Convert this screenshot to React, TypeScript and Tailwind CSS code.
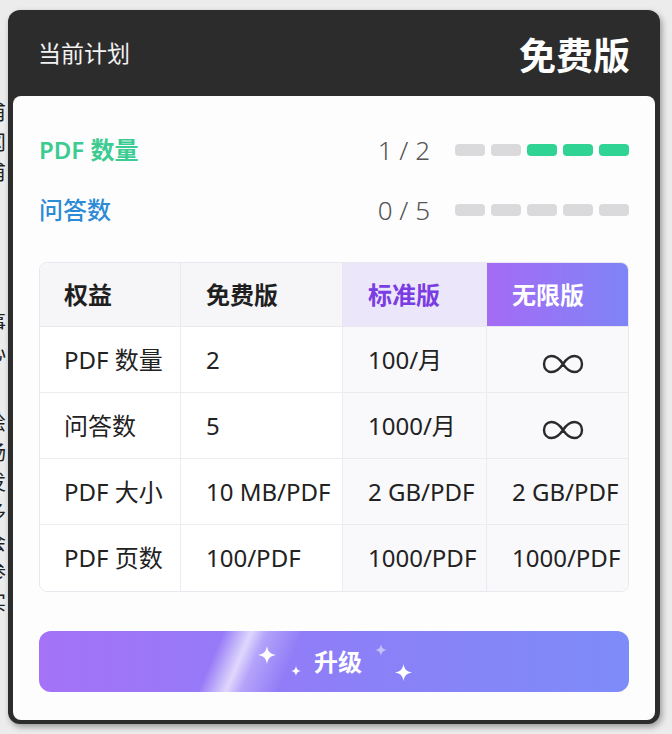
import React from "react";

type Cell = { text?: string; infinity?: boolean };

const rows: { label: string; cells: Cell[] }[] = [
  { label: "PDF 数量", cells: [{ text: "2" }, { text: "100/月" }, { infinity: true }] },
  { label: "问答数", cells: [{ text: "5" }, { text: "1000/月" }, { infinity: true }] },
  { label: "PDF 大小", cells: [{ text: "10 MB/PDF" }, { text: "2 GB/PDF" }, { text: "2 GB/PDF" }] },
  { label: "PDF 页数", cells: [{ text: "100/PDF" }, { text: "1000/PDF" }, { text: "1000/PDF" }] },
];

function Infinity() {
  return (
    <svg width="42" height="22" viewBox="0 0 42 22" fill="none">
      <path
        d="M21 11 C17 5 13 3 9.5 3 C5 3 2 6.5 2 11 C2 15.5 5 19 9.5 19 C13 19 17 17 21 11 C25 5 29 3 32.5 3 C37 3 40 6.5 40 11 C40 15.5 37 19 32.5 19 C29 19 25 17 21 11 Z"
        stroke="#2a2a2e"
        strokeWidth="2.4"
      />
    </svg>
  );
}

function Sparkle({ size, className }: { size: number; className: string }) {
  return (
    <svg width={size} height={size} viewBox="0 0 20 20" className={className}>
      <path d="M10 0 C11.2 6.5 13.5 8.8 20 10 C13.5 11.2 11.2 13.5 10 20 C8.8 13.5 6.5 11.2 0 10 C6.5 8.8 8.8 6.5 10 0 Z" fill="white" />
    </svg>
  );
}

function UsageBars({ filled, color }: { filled: number; color: string }) {
  return (
    <div className="ml-[25px] flex gap-[6px]">
      {[0, 1, 2, 3, 4].map((i) => (
        <div
          key={i}
          className={`h-[12px] w-[30px] rounded-[4px] ${i >= 5 - filled ? color : "bg-[#dadadc]"}`}
        />
      ))}
    </div>
  );
}

export default function App() {
  return (
    <div
      className="relative flex h-[734px] w-[672px] overflow-hidden bg-[#ececec]"
      style={{ fontFamily: '"Noto Sans", "Noto Sans CJK SC", sans-serif' }}
    >
      {/* page peeking out behind the dialog */}
      <div className="flex w-[8px] flex-col overflow-hidden pt-[100px] text-[20px] leading-[26px] text-[#222]">
        <div className="-ml-[14px] flex flex-col gap-[4px]">
          <span>甫</span>
          <span>冈</span>
          <span>甫</span>
          <span className="mt-[120px]">事</span>
          <span>心</span>
          <span className="mt-[40px]">绘</span>
          <span>杨</span>
          <span>发</span>
          <span>多</span>
          <span>会</span>
          <span>参</span>
          <span>实</span>
        </div>
      </div>

      <div className="mt-[10px] flex h-[714px] w-[652px] flex-col rounded-[12px] bg-[#2c2c2c] px-[5px] pb-[4px] shadow-[2px_3px_6px_rgba(0,0,0,0.35)]">
        <div className="flex h-[87px] items-center justify-between px-[25px]">
          <span className="text-[23px] text-[#f2f2f2]">当前计划</span>
          <span className="mt-[6px] text-[37px] font-bold text-white">免费版</span>
        </div>

        <div className="flex flex-1 flex-col rounded-[8px] bg-[#fdfdfe] px-[26px] pb-[28px] pt-[36px]">
          <div className="flex h-[36px] items-center">
            <span className="flex-1 text-[24px] font-semibold text-[#3ccb90]">PDF 数量</span>
            <span className="text-[26px] font-light text-[#555]">1 / 2</span>
            <UsageBars filled={3} color="bg-[#2fd393]" />
          </div>
          <div className="mt-[24px] flex h-[36px] items-center">
            <span className="flex-1 text-[24px] font-medium text-[#2d8bd6]">问答数</span>
            <span className="text-[26px] font-light text-[#555]">0 / 5</span>
            <UsageBars filled={0} color="bg-[#2fd393]" />
          </div>

          <div className="mt-[34px] overflow-hidden rounded-[8px] border border-[#e8e8ee]">
            <div className="grid grid-cols-[141px_162px_144px_1fr]">
              <div className="flex h-[64px] items-center border-b border-r border-[#e8e8ee] bg-[#f6f6f8] pl-[24px] text-[24px] font-bold text-[#1f1f1f]">
                权益
              </div>
              <div className="flex h-[64px] items-center border-b border-r border-[#e8e8ee] bg-[#f6f6f8] pl-[25px] text-[24px] font-bold text-[#1f1f1f]">
                免费版
              </div>
              <div className="flex h-[64px] items-center border-b border-r border-[#e8e8ee] bg-[#ece6fb] pl-[25px] text-[24px] font-bold text-[#7a3de2]">
                标准版
              </div>
              <div className="flex h-[64px] items-center border-b border-[#e8e8ee] bg-[linear-gradient(90deg,#a56bf5,#7f84f6)] pl-[25px] text-[24px] font-bold text-white">
                无限版
              </div>

              {rows.map((row, r) => {
                const last = r === rows.length - 1;
                return (
                  <React.Fragment key={row.label}>
                    <div
                      className={`flex h-[66px] items-center border-r border-[#ececf0] bg-white pl-[24px] text-[24px] text-[#222] ${last ? "" : "border-b"}`}
                    >
                      {row.label}
                    </div>
                    {row.cells.map((c, i) => (
                      <div
                        key={i}
                        className={`flex h-[66px] items-center whitespace-nowrap border-[#ececf0] pl-[25px] text-[24px] text-[#222] ${last ? "" : "border-b"} ${i < 2 ? "border-r" : ""} ${i === 0 ? "bg-white" : "bg-[#f9f9fb]"}`}
                      >
                        {c.infinity ? (
                          <div className="ml-[30px] mt-[8px]">
                            <Infinity />
                          </div>
                        ) : (
                          c.text
                        )}
                      </div>
                    ))}
                  </React.Fragment>
                );
              })}
            </div>
          </div>

          <button className="relative mt-[39px] flex h-[61px] w-full items-center justify-center rounded-[12px] bg-[linear-gradient(113deg,rgba(255,255,255,0)_30%,rgba(255,255,255,0.7)_34.5%,rgba(255,255,255,0.3)_37%,rgba(255,255,255,0)_43%),linear-gradient(90deg,#a472f7,#8b80f7_55%,#7e8cf8)]">
            <span className="ml-[8px] text-[24px] font-bold text-white">升级</span>
            <Sparkle size={18} className="absolute left-[219px] top-[15px]" />
            <Sparkle size={10} className="absolute left-[252px] top-[35px]" />
            <Sparkle size={12} className="absolute left-[336px] top-[13px] opacity-50" />
            <Sparkle size={17} className="absolute left-[356px] top-[33px]" />
          </button>
        </div>
      </div>
    </div>
  );
}
